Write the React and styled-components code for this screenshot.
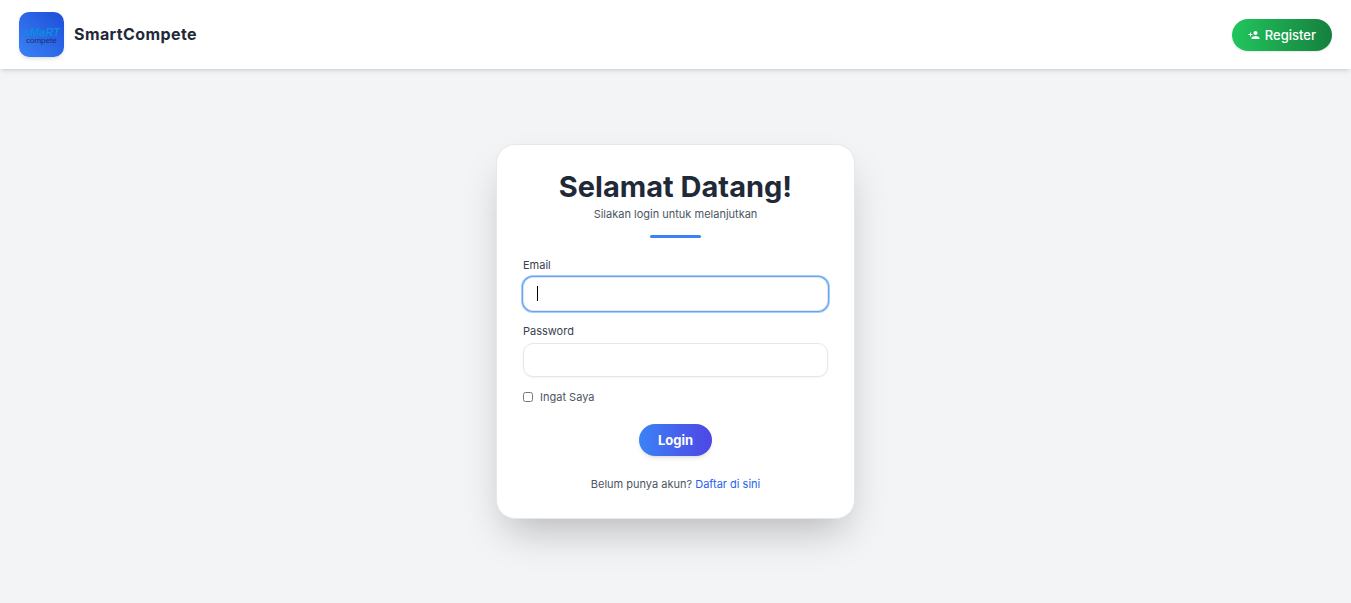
import React from 'react';
import styled, { createGlobalStyle, css, keyframes } from 'styled-components';
import { MdPersonAdd } from 'react-icons/md';

const GlobalStyle = createGlobalStyle`
  *, *::before, *::after { box-sizing: border-box; }
  body {
    margin: 0;
    background: #f3f4f6;
    color: #1f2937;
    font-family: Inter, "Liberation Sans", sans-serif;
    font-size: 11px;
    line-height: 16px;
  }
`;

const Page = styled.div`
  display: flex;
  flex-direction: column;
  min-height: 100vh;
`;

const Header = styled.header`
  display: flex;
  align-items: center;
  justify-content: space-between;
  padding: 12px 19px;
  background: #fff;
  box-shadow: 0 3px 5px -1px rgba(0, 0, 0, 0.1), 0 2px 3px -2px rgba(0, 0, 0, 0.1);
`;

const Brand = styled.a`
  display: flex;
  align-items: center;
  gap: 10px;
  color: #1f2937;
  text-decoration: none;
`;

const BrandName = styled.span`
  font-size: 16px;
  line-height: 23px;
  font-weight: 700;
  letter-spacing: 0.025em;
`;

const LogoTile = styled.span`
  display: flex;
  width: 45px;
  height: 45px;
  border-radius: 10px;
  background: linear-gradient(to top right, #3b82f6, #1d4ed8);
  box-shadow: 0 3px 5px -1px rgba(0, 0, 0, 0.1), 0 2px 3px -2px rgba(0, 0, 0, 0.1);
`;

const pill = css`
  display: inline-flex;
  align-items: center;
  justify-content: center;
  height: 32px;
  border: 0;
  border-radius: 16px;
  color: #fff;
  font-family: inherit;
  font-size: 13px;
  line-height: 20px;
  text-decoration: none;
  cursor: pointer;
  box-shadow: 0 3px 5px -1px rgba(0, 0, 0, 0.1), 0 2px 3px -2px rgba(0, 0, 0, 0.1);
`;

const RegisterLink = styled.a`
  ${pill}
  gap: 5px;
  padding: 0 16px;
  font-weight: 500;
  background: linear-gradient(to right, #22c55e, #15803d);
  box-shadow: 0 1px 2px rgba(0, 0, 0, 0.1);
`;

const LoginButton = styled.button`
  ${pill}
  align-self: center;
  margin-top: 19px;
  padding: 0 19px;
  font-weight: 700;
  background: linear-gradient(to right, #3b82f6, #4f46e5);
`;

const Main = styled.main`
  flex: 1;
  display: flex;
  align-items: center;
  justify-content: center;
  padding: 16px 16px 26px;
`;

const Card = styled.section`
  width: 100%;
  max-width: 359px;
  padding: 26px;
  border: 1px solid #e5e7eb;
  border-radius: 19px;
  background: #fff;
  box-shadow: 0 20px 40px -10px rgba(0, 0, 0, 0.25);
`;

const Intro = styled.div`
  display: flex;
  flex-direction: column;
  align-items: center;
  text-align: center;
  color: #4b5563;
`;

const Title = styled.h1`
  margin: 0 0 3px;
  color: #1f2937;
  font-size: 29px;
  line-height: 32px;
  font-weight: 700;
`;

const Subtitle = styled.p`
  margin: 0;
`;

const Rule = styled.span`
  width: 51px;
  height: 3px;
  margin-top: 13px;
  border-radius: 2px;
  background: #3b82f6;
`;

const Form = styled.form`
  display: flex;
  flex-direction: column;
  margin-top: 19px;
`;

const Field = styled.div`
  display: flex;
  flex-direction: column;
  gap: 4px;
  margin-bottom: 12px;
`;

const Label = styled.label`
  color: #374151;
`;

const blink = keyframes`
  0%, 90% { opacity: 1; }
  91%, 100% { opacity: 0; }
`;

const InputBox = styled.div`
  position: relative;
  display: flex;
`;

const Caret = styled.span`
  position: absolute;
  left: 14px;
  top: 9px;
  width: 1px;
  height: 15px;
  background: #000;
  opacity: 0;
  pointer-events: none;
`;

const Input = styled.input`
  width: 100%;
  height: 34px;
  padding: 0 13px;
  border: 1px solid #e5e7eb;
  border-radius: 10px;
  outline: none;
  background: #fff;
  color: #000;
  font: 13px/20px Inter, "Liberation Sans", sans-serif;
  box-shadow: 0 1px 2px rgba(0, 0, 0, 0.05);

  &:focus {
    box-shadow: 0 0 0 1px #60a5fa, 0 0 0 2px #a5cdfd;
  }

  &:focus:placeholder-shown {
    caret-color: transparent;
  }

  &:focus:placeholder-shown + ${Caret} {
    opacity: 1;
    animation: ${blink} 10s infinite;
  }
`;

const Remember = styled.label`
  display: flex;
  align-items: center;
  gap: 7px;
  color: #4b5563;
`;

const Checkbox = styled.input`
  width: 10px;
  height: 10px;
  margin: 0;
`;

const SignUp = styled.p`
  margin: 20px 0 0;
  text-align: center;
  color: #4b5563;
`;

const TextLink = styled.a`
  color: #2563eb;
  text-decoration: none;
`;

function Logo() {
  return (
    <LogoTile>
      <svg width="45" height="45" viewBox="0 0 45 45" aria-hidden="true">
        <text x="5" y="24" fill="#0a8ce0" fontFamily="Liberation Sans, sans-serif" fontSize="11" fontWeight="700" fontStyle="italic">sMaRT</text>
        <text x="7" y="31" fill="#16306f" fontFamily="Liberation Sans, sans-serif" fontSize="8">compete</text>
      </svg>
    </LogoTile>
  );
}

function TextField({ id, label, type, autoFocus }) {
  return (
    <Field>
      <Label htmlFor={id}>{label}</Label>
      <InputBox>
        <Input id={id} type={type} placeholder=" " autoFocus={autoFocus} />
        <Caret />
      </InputBox>
    </Field>
  );
}

export default function App() {
  return (
    <Page>
      <GlobalStyle />
      <Header>
        <Brand href="#">
          <Logo />
          <BrandName>SmartCompete</BrandName>
        </Brand>
        <RegisterLink href="#register">
          <MdPersonAdd size={12} />
          Register
        </RegisterLink>
      </Header>
      <Main>
        <Card>
          <Intro>
            <Title>Selamat Datang!</Title>
            <Subtitle>Silakan login untuk melanjutkan</Subtitle>
            <Rule />
          </Intro>
          <Form onSubmit={(e) => e.preventDefault()}>
            <TextField id="email" label="Email" type="email" autoFocus />
            <TextField id="password" label="Password" type="password" />
            <Remember>
              <Checkbox type="checkbox" />
              Ingat Saya
            </Remember>
            <LoginButton type="submit">Login</LoginButton>
          </Form>
          <SignUp>
            Belum punya akun? <TextLink href="#register">Daftar di sini</TextLink>
          </SignUp>
        </Card>
      </Main>
    </Page>
  );
}
